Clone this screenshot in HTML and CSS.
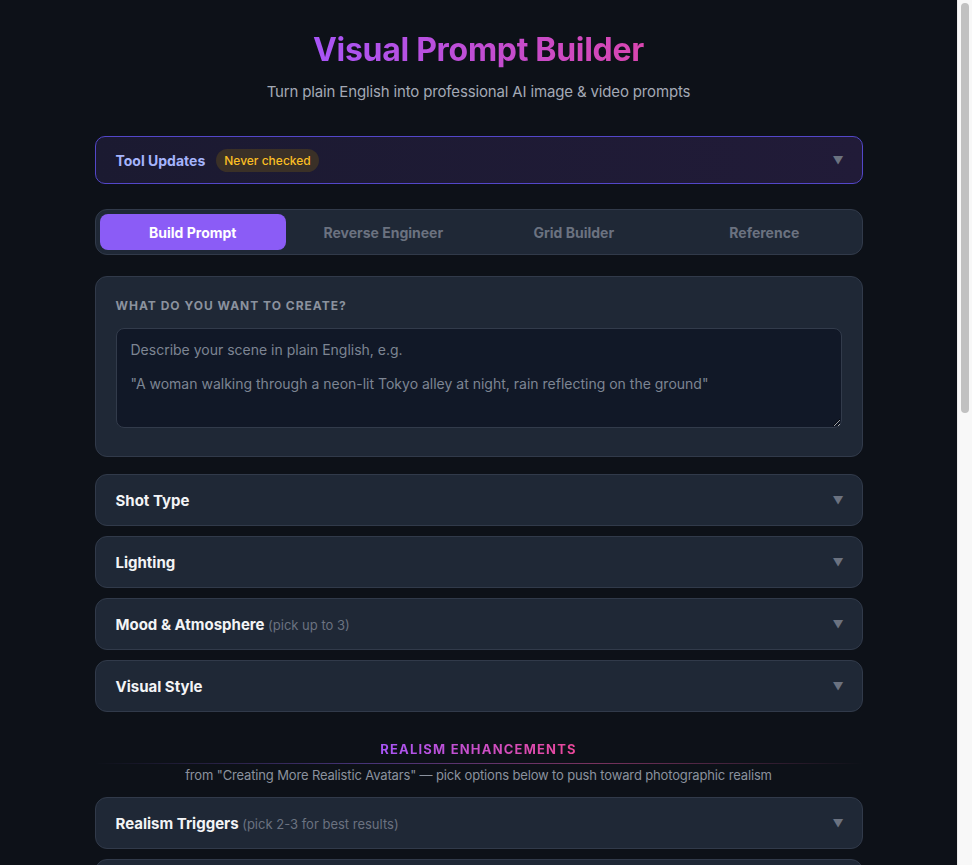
FILE: index.html
```html
<!DOCTYPE html>
<html lang="en">
<head>
    <meta charset="UTF-8">
    <meta name="viewport" content="width=device-width, initial-scale=1.0">
    <title>Visual Prompt Builder</title>
    <link rel="stylesheet" href="styles.css">
</head>
<body>
    <div class="container">
        <header class="header">
            <h1>Visual Prompt Builder</h1>
            <p>Turn plain English into professional AI image &amp; video prompts</p>
        </header>

        <section class="updates">
            <div class="updates-left">
                <span class="updates-title">Tool Updates</span>
                <span class="badge">Never checked</span>
            </div>
            <span class="arrow">&#9660;</span>
        </section>

        <nav class="tabs">
            <button class="tab active">Build Prompt</button>
            <button class="tab">Reverse Engineer</button>
            <button class="tab">Grid Builder</button>
            <button class="tab">Reference</button>
        </nav>

        <section class="card input-card">
            <label for="scene" class="field-label">What do you want to create?</label>
            <textarea id="scene" placeholder="Describe your scene in plain English, e.g.&#10;&#10;&quot;A woman walking through a neon-lit Tokyo alley at night, rain reflecting on the ground&quot;"></textarea>
        </section>

        <div class="accordion-list">
            <div class="accordion"><span class="acc-title">Shot Type</span><span class="arrow">&#9660;</span></div>
            <div class="accordion"><span class="acc-title">Lighting</span><span class="arrow">&#9660;</span></div>
            <div class="accordion"><span class="acc-title">Mood &amp; Atmosphere <small>(pick up to 3)</small></span><span class="arrow">&#9660;</span></div>
            <div class="accordion"><span class="acc-title">Visual Style</span><span class="arrow">&#9660;</span></div>
        </div>

        <div class="divider">
            <h2>Realism Enhancements</h2>
            <div class="divider-line"></div>
            <p>from "Creating More Realistic Avatars" — pick options below to push toward photographic realism</p>
        </div>

        <div class="accordion-list">
            <div class="accordion"><span class="acc-title">Realism Triggers <small>(pick 2-3 for best results)</small></span><span class="arrow">&#9660;</span></div>
            <div class="accordion"><span class="acc-title">Camera &amp; Lens</span><span class="arrow">&#9660;</span></div>
            <div class="accordion"><span class="acc-title">Skin &amp; Texture</span><span class="arrow">&#9660;</span></div>
            <div class="accordion"><span class="acc-title">Imperfections</span><span class="arrow">&#9660;</span></div>
            <div class="accordion"><span class="acc-title">Film &amp; Grain</span><span class="arrow">&#9660;</span></div>
            <div class="accordion"><span class="acc-title">Negative Prompt</span><span class="arrow">&#9660;</span></div>
        </div>

        <section class="card output-card">
            <div class="field-label">Generated Prompt</div>
            <div class="output-box">Your prompt will appear here...</div>
            <div class="button-row">
                <button class="btn primary">Generate Prompt</button>
                <button class="btn">Copy</button>
                <button class="btn">Reset</button>
            </div>
        </section>
    </div>

    <!-- classic scrollbar as seen in the screenshot -->
    <div class="scrollbar"><div class="scrollbar-thumb"></div></div>
</body>
</html>
```

FILE: styles.css
```css
:root {
    --bg: #0d1118;
    --card: #1f2836;
    --card-border: #313a4a;
    --input-bg: #111827;
    --text: #f3f4f6;
    --text-muted: #8b929e;
    --text-dim: #6b7280;
    --accent: #8b5cf6;
}

* {
    margin: 0;
    padding: 0;
    box-sizing: border-box;
}

body {
    font-family: Inter, 'Noto Sans', Arial, sans-serif;
    background-color: var(--bg);
    color: var(--text);
    min-height: 100vh;
    padding-right: 15px;
}

.scrollbar {
    position: fixed;
    top: 0;
    right: 0;
    width: 15px;
    height: 100vh;
    background-color: #f8f8f8;
    border-left: 1px solid #ececec;
    padding: 3px 3px 0 3px;
}

.scrollbar-thumb {
    height: 410px;
    background-color: #c1c1c1;
    border-radius: 4px;
}

.container {
    max-width: 800px;
    margin: 0 auto;
    padding: 30px 16px 60px;
}

.header {
    text-align: center;
    margin-bottom: 35px;
}

.header h1 {
    font-size: 32px;
    font-weight: 700;
    letter-spacing: -0.3px;
    line-height: 40px;
    background: linear-gradient(90deg, #a855f7, #d946b0);
    -webkit-background-clip: text;
    background-clip: text;
    color: transparent;
    display: inline-block;
}

.header p {
    margin-top: 12px;
    font-size: 15px;
    letter-spacing: -0.15px;
    color: #a3a9b5;
}

.updates {
    display: flex;
    justify-content: space-between;
    align-items: center;
    height: 48px;
    padding: 0 18px 0 20px;
    border: 1px solid #5347c9;
    border-radius: 10px;
    background: linear-gradient(90deg, #1b1a31, #211b38);
    margin-bottom: 25px;
}

.updates-left {
    display: flex;
    align-items: center;
    gap: 11px;
}

.updates-title {
    font-size: 14px;
    font-weight: 700;
    color: #a5b4fc;
}

.badge {
    font-size: 12px;
    font-weight: 500;
    color: #fbbf24;
    background-color: #3a3027;
    padding: 4px 8px;
    border-radius: 999px;
}

.arrow {
    font-size: 11px;
    color: #6b7280;
}

.tabs {
    display: grid;
    grid-template-columns: repeat(4, 1fr);
    gap: 4px;
    padding: 4px;
    background-color: var(--card);
    border: 1px solid var(--card-border);
    border-radius: 12px;
    margin-bottom: 21px;
}

.tab {
    height: 36px;
    border: none;
    border-radius: 8px;
    background: none;
    font-family: inherit;
    font-size: 14px;
    font-weight: 700;
    color: var(--text-dim);
    cursor: pointer;
}

.tab.active {
    background-color: var(--accent);
    color: #ffffff;
}

.card {
    background-color: var(--card);
    border: 1px solid var(--card-border);
    border-radius: 12px;
    padding: 20px;
    margin-bottom: 17px;
}

.input-card {
    padding: 21px 20px 28px;
}

.field-label {
    display: block;
    font-size: 12px;
    font-weight: 700;
    text-transform: uppercase;
    letter-spacing: 1px;
    color: var(--text-muted);
    margin-bottom: 14px;
    line-height: 16px;
}

textarea {
    display: block;
    width: 100%;
    height: 100px;
    padding: 12px 14px;
    background-color: var(--input-bg);
    border: 1px solid #323b4b;
    border-radius: 8px;
    color: var(--text);
    font-family: inherit;
    font-size: 14px;
    line-height: 17px;
    resize: vertical;
}

textarea::placeholder {
    color: #7d8593;
}

.accordion-list {
    display: flex;
    flex-direction: column;
    gap: 10px;
}

.accordion {
    display: flex;
    justify-content: space-between;
    align-items: center;
    height: 52px;
    padding: 0 18px 0 20px;
    background-color: var(--card);
    border: 1px solid var(--card-border);
    border-radius: 12px;
}

.acc-title {
    font-size: 15px;
    font-weight: 700;
    color: #f3f4f6;
}

.acc-title small {
    font-size: 13px;
    font-weight: 400;
    color: var(--text-dim);
}

.divider {
    text-align: center;
    margin: 26px 0 14px;
}

.divider h2 {
    font-size: 13px;
    font-weight: 700;
    letter-spacing: 1.2px;
    text-transform: uppercase;
    background: linear-gradient(90deg, #a855f7, #ec4899);
    -webkit-background-clip: text;
    background-clip: text;
    color: transparent;
    display: inline-block;
    line-height: 16px;
}

.divider-line {
    height: 1px;
    margin: 5px 0 3px;
    background: linear-gradient(90deg, transparent, #6d4bb8 35%, #c04a8e 65%, transparent);
    opacity: 0.6;
}

.divider p {
    font-size: 13px;
    color: var(--text-muted);
    letter-spacing: -0.15px;
}

.output-card {
    margin-top: 24px;
}

.output-box {
    min-height: 140px;
    padding: 14px;
    background-color: var(--input-bg);
    border: 1px solid #323b4b;
    border-radius: 8px;
    color: #7d8593;
    font-size: 14px;
}

.button-row {
    display: flex;
    gap: 10px;
    margin-top: 16px;
}

.btn {
    padding: 10px 18px;
    border: 1px solid var(--card-border);
    border-radius: 8px;
    background-color: #2a3444;
    color: #e5e7eb;
    font-family: inherit;
    font-size: 14px;
    font-weight: 600;
}

.btn.primary {
    background-color: var(--accent);
    border-color: var(--accent);
    color: #ffffff;
}
```
